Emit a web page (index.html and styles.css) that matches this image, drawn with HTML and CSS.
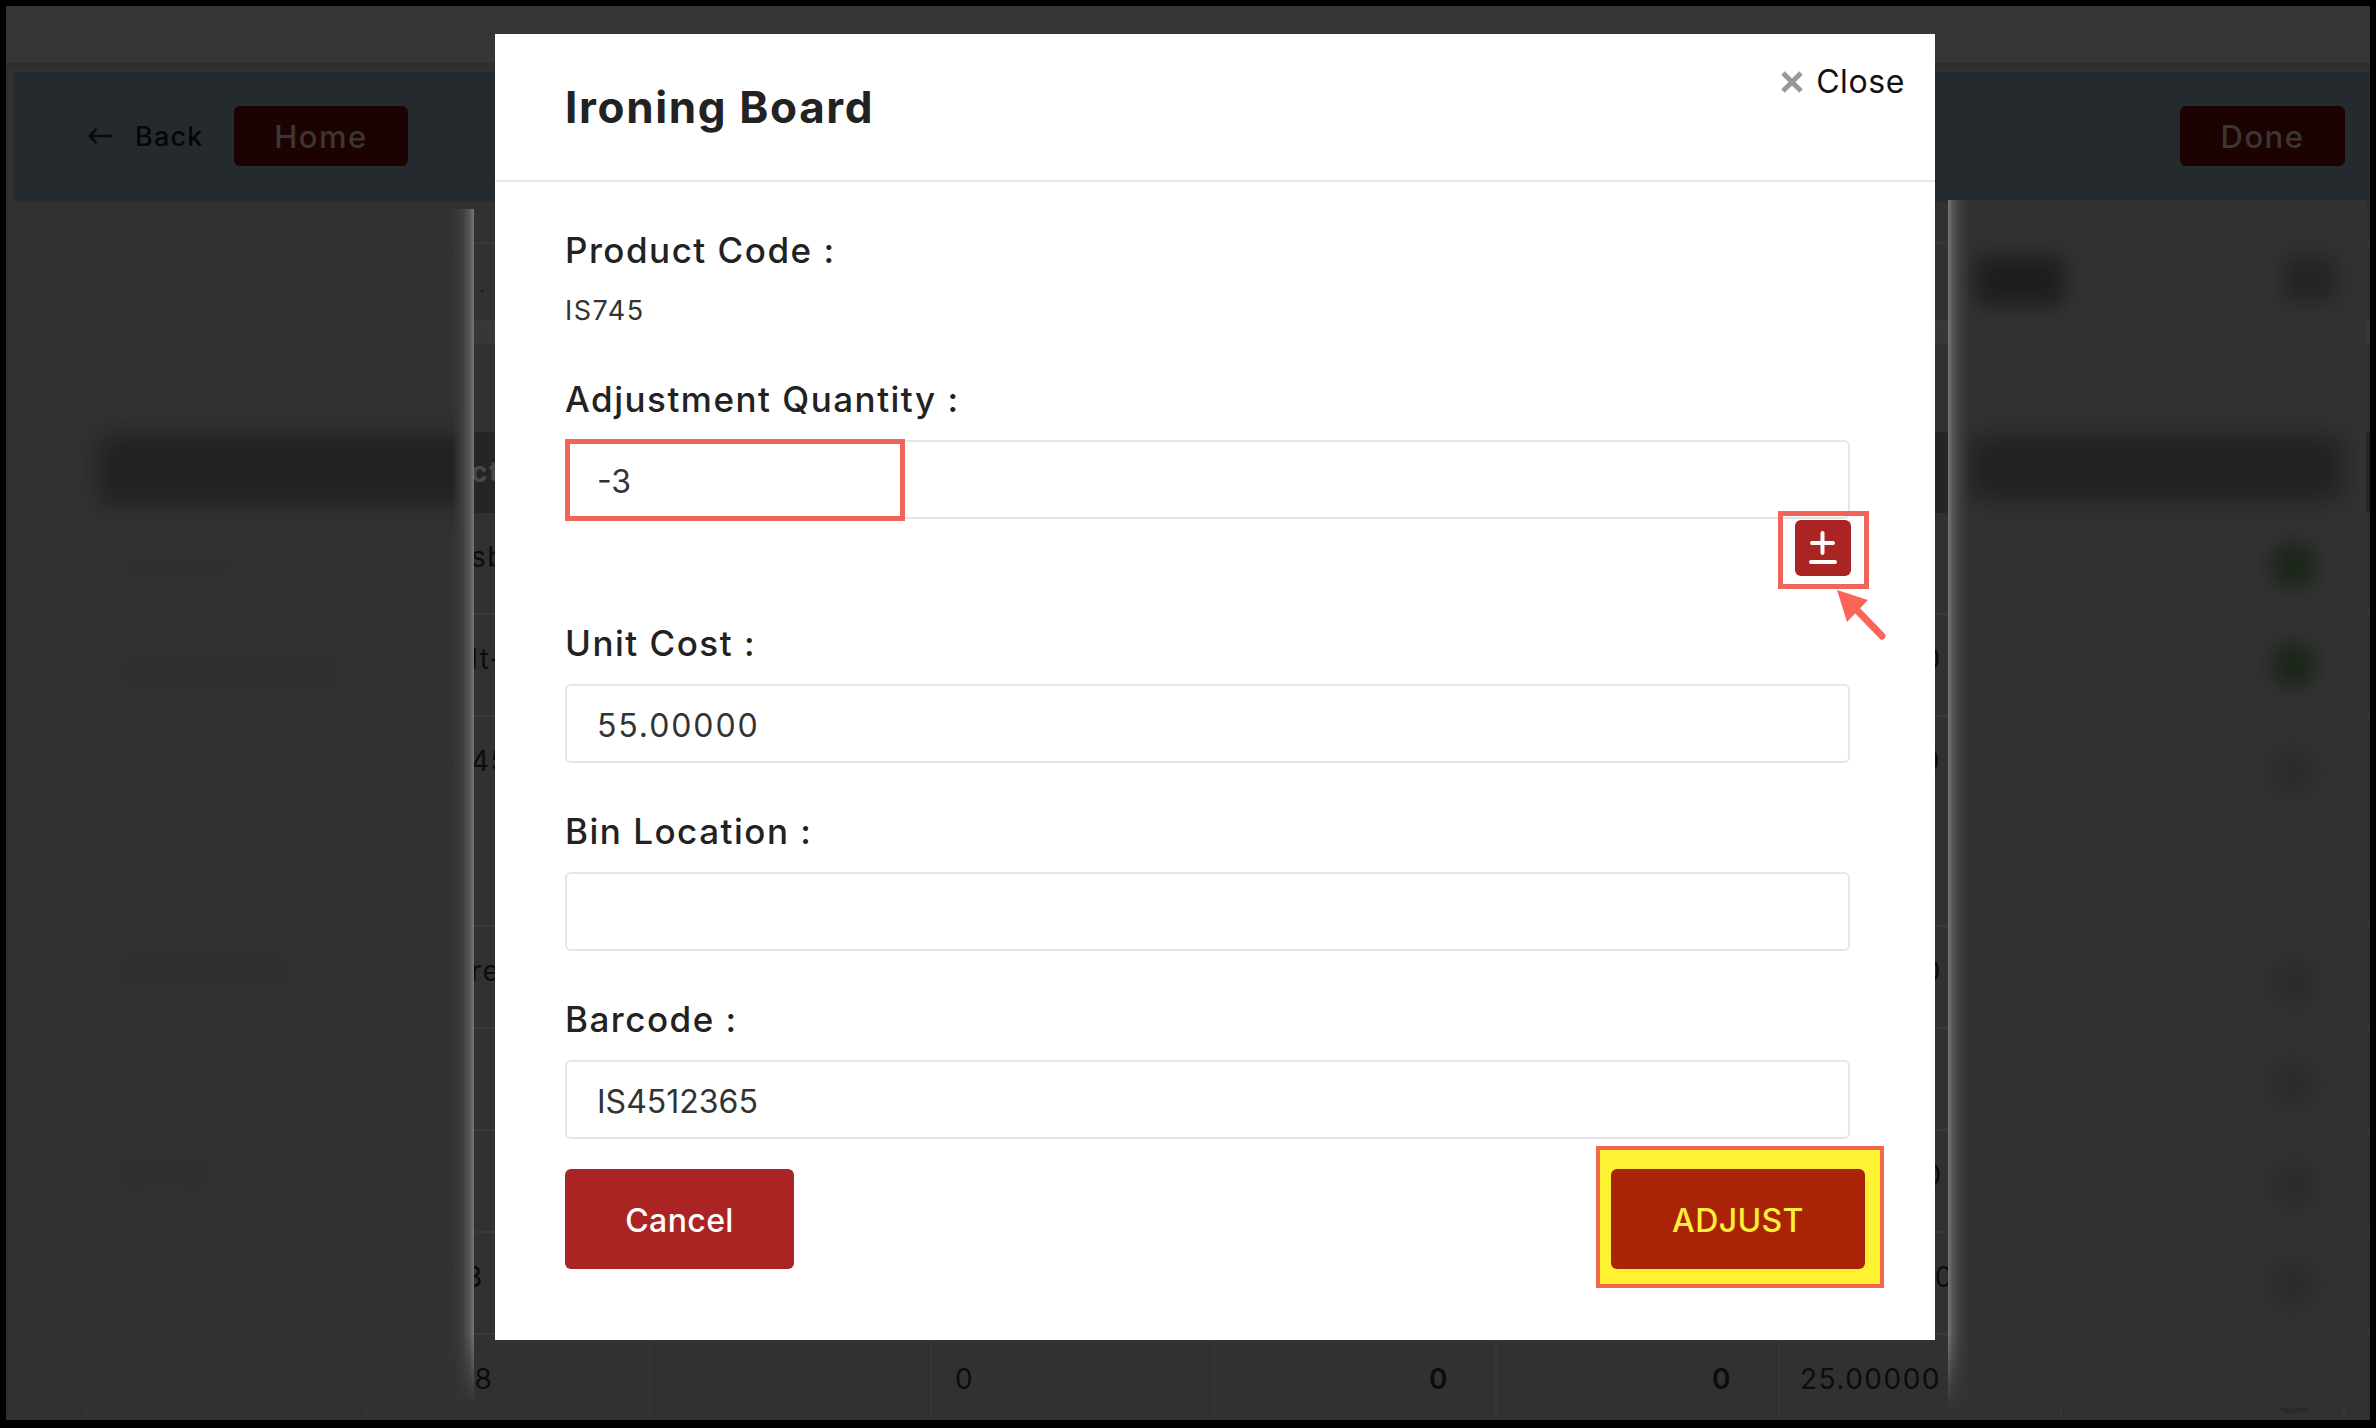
FILE: index.html
```html
<!DOCTYPE html>
<html lang="en">
<head>
<meta charset="utf-8">
<title>Ironing Board</title>
<link rel="stylesheet" href="styles.css">
</head>
<body>
<div class="screen">
  <div class="topbar"></div>
  <div class="actionbar">
    <div class="back">
      <svg class="back-icon" viewBox="0 0 26 18"><path d="M25 9H2M9 2 2 9l7 7"/></svg>
      <span>Back</span>
    </div>
    <div class="dim-btn home">Home</div>
    <div class="dim-btn done">Done</div>
  </div>
  <div class="toolbar"><div class="tool-row"><span class="dot-mark">.</span></div></div>
  <div class="table">
    <div class="row head"><span></span><span></span><span class="c2">ct</span></div>
    <div class="row"><span></span><span></span><span class="c2">sb</span><span></span><span></span><span></span><span></span><span class="c7">15.00000</span><span></span></div>
    <div class="row"><span></span><span></span><span class="c2">lt-</span><span></span><span></span><span></span><span></span><span class="c7">20.00000</span><span></span></div>
    <div class="row tall"><span></span><span></span><span class="c2">45</span><span></span><span></span><span></span><span></span><span class="c7">55.00000</span><span></span></div>
    <div class="row"><span></span><span></span><span class="c2">re</span><span></span><span></span><span></span><span></span><span class="c7">30.00000</span><span></span></div>
    <div class="row"><span></span><span></span><span></span><span></span><span></span><span></span><span></span><span class="c7">12.00000</span><span></span></div>
    <div class="row"><span></span><span></span><span></span><span></span><span></span><span></span><span></span><span class="c7">40.00000</span><span></span></div>
    <div class="row"><span></span><span></span><span class="c2 tail-3">3</span><span></span><span></span><span></span><span></span><span class="c7">125.00000</span><span></span></div>
    <div class="row last"><span></span><span></span><span class="c2 tail-58">58</span><span></span><span class="c4">0</span><span class="num">0</span><span class="num">0</span><span class="c7">25.00000</span><span class="dot-cell"><i class="status"></i></span></div>
  </div>
</div>

<div class="blur-panel left-panel">
  <i class="smudge l-band"></i><i class="smudge l-a"></i><i class="smudge l-b"></i><i class="smudge l-c"></i><i class="smudge l-d"></i>
</div>
<div class="blur-panel right-panel">
  <i class="smudge r-band"></i><i class="smudge r-btn"></i><i class="smudge r-ico"></i>
  <i class="smudge dot green d1"></i><i class="smudge dot green d2"></i>
  <i class="smudge dot d3"></i><i class="smudge dot d4"></i><i class="smudge dot d5"></i><i class="smudge dot d6"></i><i class="smudge dot d7"></i>
</div>

<main class="modal">
  <header class="modal-head">
    <h1 class="modal-title">Ironing Board</h1>
    <div class="close">
      <svg class="close-icon" viewBox="0 0 22 22"><path d="M2 2l18 18M20 2 2 20"/></svg>
      <span>Close</span>
    </div>
  </header>
  <div class="modal-body">
    <div class="label">Product Code :</div>
    <div class="code">IS745</div>

    <div class="label">Adjustment Quantity :</div>
    <div class="box"><span>-3</span><i class="mark-qty"></i></div>
    <div class="sign-row">
      <div class="sign-btn">
        <svg class="sign-icon" viewBox="0 0 56 56"><path d="M17 23h21M27.500 13v20M16 42h24"/></svg>
      </div>
      <svg class="arrow" viewBox="0 0 50 50"><path class="arrow-head" d="M1 1 32 11 11 33z"/><path class="arrow-tail" d="M16 16 46 47"/></svg>
    </div>

    <div class="label">Unit Cost :</div>
    <div class="box spaced"><span class="digits">55.00000</span></div>

    <div class="label">Bin Location :</div>
    <div class="box spaced"></div>

    <div class="label">Barcode :</div>
    <div class="box"><span>IS4512365</span></div>

    <div class="actions">
      <div class="btn cancel">Cancel</div>
      <div class="btn adjust">ADJUST</div>
    </div>
  </div>
</main>
</body>
</html>
```

FILE: styles.css
```css
* { box-sizing: border-box; }
html, body { margin: 0; height: 100%; }
body {
  width: 2376px;
  height: 1428px;
  background: #000;
  padding: 6px 6px 8px;
  overflow: hidden;
  position: relative;
  font-family: Inter, "Noto Sans", sans-serif;
  color: #222;
}

/* dimmed page */
.screen { height: 1414px; background: #313131; overflow: hidden; }
.topbar { height: 60px; background: #353535; border-bottom: 3px solid #2e2e2e; margin-bottom: 6px; }
.actionbar {
  height: 130px;
  margin-left: 8px;
  background: #242a2d;
  display: flex;
  align-items: center;
  padding: 0 25px 2px 73px;
  color: #060606;
}
.back { display: flex; align-items: center; gap: 21px; font-size: 27px; font-weight: 500; letter-spacing: 1.200px; width: 147px; }
.back-icon { width: 27px; height: 18px; fill: none; stroke: #0a0a0a; stroke-width: 2.500; }
.dim-btn {
  height: 60px;
  border-radius: 6px;
  background: #1c0302;
  color: #3c3535;
  font-size: 31px;
  font-weight: 500;
  letter-spacing: 1.500px;
  display: flex;
  align-items: center;
  justify-content: center;
}
.home { width: 174px; }
.done { width: 165px; margin-left: auto; }
.toolbar { height: 190px; margin: 40px 0 0 8px; border-top: 2px solid #383838; }
.tool-row { height: 78px; padding: 32px 0 0 466px; border-bottom: 2px solid #383838; color: #111; box-shadow: 0 22px 0 0 #373737; }
.table { margin-left: 8px; }
.row {
  display: grid;
  grid-template-columns: 73px 280px 284px 281px 283px 282px 283px 282px 283px 21px;
  height: 102px;
  border-bottom: 2px solid #393939;
  font-size: 28px;
  line-height: 28px;
  letter-spacing: 1.500px;
  color: #0c0c0c;
}
.row > span { padding-top: 30px; border-right: 2px solid #363636; min-width: 0; white-space: nowrap; overflow: hidden; }
.head { height: 81px; background: #242527; border: 0; font-weight: 700; color: #484848; }
.head > span { border: 0; padding-top: 26px; }
.tall { height: 210px; }
.last { height: 83px; border: 0; }
.c2 { padding-left: 104px; }
.row > .tail-3 { padding-left: 98px; }
.row > .tail-58 { padding-left: 89px; }
.c4 { padding-left: 23px; }
.c7 { padding-left: 20px; }
.num { text-align: right; padding-right: 46px; font-weight: 600; }
.row > .dot-cell { position: relative; overflow: visible; }
.status { position: absolute; left: 210px; top: 35px; width: 44px; height: 44px; border-radius: 50%; background: #2a2a2a; }

/* blurred side panels */
.blur-panel { position: absolute; background: #323232; overflow: hidden; }
.left-panel { left: 14px; top: 209px; width: 460px; height: 1196px; }
.right-panel { left: 1948px; top: 200px; width: 418px; height: 1208px; }
.left-panel::after, .right-panel::after {
  content: "";
  position: absolute;
  top: 0;
  bottom: 0;
  width: 22px;
  -webkit-mask-image: linear-gradient(to bottom, #000 94%, transparent);
  mask-image: linear-gradient(to bottom, #000 94%, transparent);
}
.left-panel::after { right: 0; background: linear-gradient(to left, #787878, #565656 20%, #3d3d3d 55%, rgba(50,50,50,0)); }
.right-panel::after { left: 0; background: linear-gradient(to right, #787878, #565656 20%, #3d3d3d 55%, rgba(50,50,50,0)); }
.smudge { position: absolute; display: block; background: #2c2c2c; filter: blur(10px); }
.l-band { left: 85px; top: 226px; width: 400px; height: 70px; background: #202122; filter: blur(12px); }
.l-a { left: 105px; top: 345px; width: 120px; height: 26px; background: #303030; }
.l-b { left: 105px; top: 448px; width: 220px; height: 30px; background: #2f2f2f; }
.l-c { left: 105px; top: 950px; width: 90px; height: 30px; background: #2f2f2f; }
.l-d { left: 105px; top: 745px; width: 170px; height: 30px; background: #2f2f2f; }
.r-band { left: 22px; top: 236px; width: 372px; height: 64px; background: #202122; filter: blur(12px); }
.r-btn { left: 28px; top: 56px; width: 88px; height: 50px; background: #1e1e1e; }
.r-ico { left: 336px; top: 56px; width: 52px; height: 46px; background: #242424; }
.dot { left: 322px; width: 46px; height: 46px; border-radius: 50%; background: #2b2b2b; }
.green { background: #1a2619; }
.d1 { top: 342px; }
.d2 { top: 442px; }
.d3 { top: 548px; }
.d4 { top: 760px; }
.d5 { top: 860px; }
.d6 { top: 962px; }
.d7 { top: 1062px; }

/* modal */
.modal {
  position: absolute;
  left: 495px;
  top: 34px;
  width: 1440px;
  height: 1306px;
  background: #fff;
  isolation: isolate;
}
.modal-head {
  height: 148px;
  border-bottom: 2px solid #e8e8e8;
  display: flex;
  justify-content: space-between;
  align-items: flex-start;
  padding: 0 30px 0 70px;
}
.modal-title { margin: 50px 0 0; font-size: 44px; line-height: 46px; font-weight: 700; letter-spacing: 1.650px; color: #222; }
.close { display: flex; align-items: center; gap: 13px; margin-top: 30px; font-size: 32px; line-height: 36px; letter-spacing: .6px; color: #111; }
.close-icon { width: 22px; height: 22px; fill: none; stroke: #999; stroke-width: 5; }
.modal-body { padding: 48px 85px 70px 70px; }
.label { height: 40px; line-height: 40px; font-size: 35px; font-weight: 500; letter-spacing: 1.500px; color: #222; margin-bottom: 21px; }
.code { height: 41px; line-height: 41px; font-size: 27px; letter-spacing: 1.500px; color: #333; margin-top: -1px; margin-bottom: 48px; }
.box {
  position: relative;
  height: 79px;
  border: 2px solid #e6e6e6;
  border-radius: 6px;
  display: flex;
  align-items: center;
  padding: 3px 0 0 30px;
  font-size: 32px;
  color: #333;
  margin-bottom: 30px;
}
.box.spaced { margin-bottom: 48px; }
.digits { letter-spacing: 1.900px; }
.mark-qty {
  position: absolute;
  left: -2px;
  top: -3px;
  width: 340px;
  height: 82px;
  border: 5px solid #f0645a;
}
.sign-row { margin-top: -29px; height: 103px; display: flex; justify-content: flex-end; position: relative; }
.sign-btn {
  position: relative;
  width: 56px;
  height: 56px;
  margin-right: -1px;
  border-radius: 6px;
  background: #ab2424;
}
.sign-btn::after {
  content: "";
  position: absolute;
  left: -17px;
  right: -18px;
  top: -9px;
  bottom: -13px;
  border: 5px solid #f0645a;
}
.sign-icon { display: block; width: 56px; height: 56px; fill: none; stroke: #fff; stroke-width: 4; stroke-linecap: round; }
.arrow { position: absolute; left: 1271px; top: 69px; width: 50px; height: 50px; overflow: visible; }
.arrow-head { fill: #fb6558; }
.arrow-tail { fill: none; stroke: #fb6558; stroke-width: 7; stroke-linecap: round; }
.actions { display: flex; justify-content: space-between; }
.btn {
  position: relative;
  height: 100px;
  border-radius: 6px;
  display: flex;
  align-items: center;
  justify-content: center;
  padding-top: 2px;
  font-size: 32px;
  font-weight: 500;
  letter-spacing: .4px;
}
.cancel { width: 229px; background: #ab2424; color: #fff; }
.adjust { width: 254px; margin-right: -15px; background: #a92406; color: #ffef3a; }
.adjust::before {
  content: "";
  position: absolute;
  left: -15px;
  right: -19px;
  top: -23px;
  bottom: -19px;
  background: #fff233;
  border: 4px solid #f2684c;
  z-index: -1;
}
```
